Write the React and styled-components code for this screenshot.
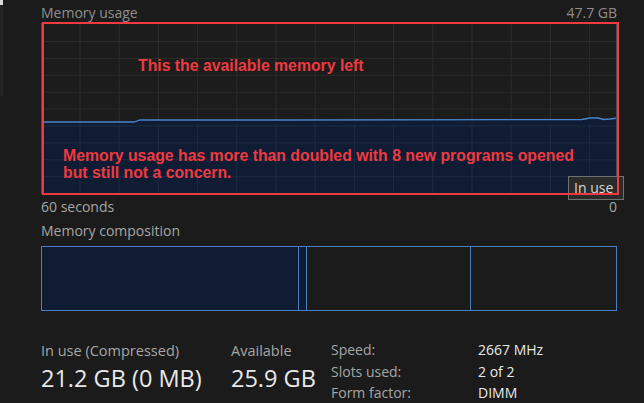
import React from "react";
import styled, { createGlobalStyle } from "styled-components";

const GlobalStyle = createGlobalStyle`
  html, body {
    margin: 0;
    padding: 0;
    background: #1b1b1b;
    overflow: hidden;
  }
  body {
    font-family: "Open Sans", "Noto Sans", sans-serif;
  }
`;

const CHART_W = 576;
const CHART_H = 171;

const usage = [
  [0, 98], [92, 98], [98, 96], [250, 96], [540, 95.5], [548, 94], [556, 94],
  [562, 95.5], [568, 95], [576, 94],
];

const Page = styled.div`
  display: flex;
  width: 644px;
  height: 403px;
`;

const SideEdge = styled.div`
  width: 3px;
  height: 96px;
  background: #242424;
  border-top: 5px solid #d8d8d8;
  box-sizing: border-box;
`;

const Content = styled.div`
  margin-left: 38px;
  width: 576px;
  padding-top: 4px;
`;

const Row = styled.div`
  display: flex;
  justify-content: space-between;
  align-items: flex-end;
  height: ${(p) => p.$h || 18}px;
  font-size: 14px;
  color: ${(p) => p.$color || "#9a9a9a"};
  line-height: 18px;
`;

const Chart = styled.div`
  position: relative;
  margin-top: 1px;
  width: ${CHART_W}px;
  height: ${CHART_H}px;
  box-sizing: border-box;
  border: 1px solid #4d4d4d;
  background: #1c1c1c;
  svg {
    display: block;
  }
`;

const RedFrame = styled.div`
  position: absolute;
  left: 0;
  top: -2px;
  right: -3px;
  bottom: -2px;
  border: 2px solid #ee3a40;
  pointer-events: none;
`;

const Note = styled.div`
  position: absolute;
  left: ${(p) => p.$x}px;
  top: ${(p) => p.$y}px;
  font-family: "Liberation Sans", Arial, sans-serif;
  font-weight: 700;
  font-size: 15.8px;
  line-height: 17px;
  color: #ee3a40;
  white-space: nowrap;
`;

const Tooltip = styled.div`
  position: absolute;
  left: 526px;
  top: 152px;
  width: 56px;
  height: 24px;
  box-sizing: border-box;
  background: #2b2b2b;
  border: 1px solid #707070;
  color: #d6d6d6;
  font-size: 14px;
  line-height: 22px;
  padding-left: 5px;
`;

const Composition = styled.div`
  display: flex;
  margin-top: 6px;
  height: 65px;
  border: 1px solid #4a7fc1;
  box-sizing: border-box;
`;

const Segment = styled.div`
  box-sizing: border-box;
  width: ${(p) => p.$w}px;
  flex: ${(p) => (p.$grow ? 1 : "none")};
  background: ${(p) => (p.$filled ? "#0f1c33" : "transparent")};
  border-right: ${(p) => (p.$last ? "none" : "1px solid #4a7fc1")};
`;

const Stats = styled.div`
  display: flex;
  margin-top: 31px;
`;

const Stat = styled.div`
  width: ${(p) => p.$w}px;
`;

const StatLabel = styled.div`
  font-size: 14.5px;
  line-height: 18px;
  color: #a6a6a6;
`;

const StatValue = styled.div`
  margin-top: 5px;
  font-size: 23.5px;
  line-height: 26px;
  color: #e8e8e8;
`;

const Specs = styled.div`
  display: grid;
  grid-template-columns: 147px auto;
  font-size: 14px;
  line-height: 21.5px;
  margin-top: -3px;
`;

const SpecKey = styled.div`
  color: #a6a6a6;
`;

const SpecVal = styled.div`
  color: #e8e8e8;
`;

function UsageChart() {
  const w = CHART_W - 2;
  const h = CHART_H - 2;
  const vLines = Array.from({ length: 14 }, (_, i) => 38 + i * 39.2);
  const hLines = Array.from({ length: 9 }, (_, i) => 17.5 + i * 16.9);
  const line = usage.map(([x, y]) => `${x},${y}`).join(" ");
  const area = `0,${h} ${line} ${w},${h}`;
  return (
    <svg width={w} height={h} viewBox={`0 0 ${w} ${h}`}>
      {vLines.map((x) => (
        <line key={x} x1={x} y1={0} x2={x} y2={h} stroke="#2c2c2c" strokeWidth="1" />
      ))}
      {hLines.map((y) => (
        <line key={y} x1={0} y1={y} x2={w} y2={y} stroke="#2c2c2c" strokeWidth="1" />
      ))}
      <polygon points={area} fill="#0f1c33" />
      {vLines.map((x) => (
        <line key={"b" + x} x1={x} y1={100} x2={x} y2={h} stroke="#1d2b44" strokeWidth="1" />
      ))}
      {hLines.filter((y) => y > 99).map((y) => (
        <line key={"b" + y} x1={0} y1={y} x2={w} y2={y} stroke="#1d2b44" strokeWidth="1" />
      ))}
      <polyline points={line} fill="none" stroke="#4a84cc" strokeWidth="1.3" />
    </svg>
  );
}

export default function App() {
  return (
    <Page>
      <GlobalStyle />
      <SideEdge />
      <Content>
        <Row $h={18} $color="#8f8f8f">
          <span>Memory usage</span>
          <span>47.7 GB</span>
        </Row>
        <Chart>
          <UsageChart />
          <Tooltip>In use</Tooltip>
          <Note $x={96} $y={33}>This the available memory left</Note>
          <Note $x={21} $y={123}>
            Memory usage has more than doubled with 8 new programs opened
            <br />
            but still not a concern.
          </Note>
          <RedFrame />
        </Chart>
        <Row $h={22} $color="#a6a6a6">
          <span>60 seconds</span>
          <span>0</span>
        </Row>
        <Row $h={24} $color="#a6a6a6">
          <span>Memory composition</span>
        </Row>
        <Composition>
          <Segment $w={257} $filled />
          <Segment $w={8} $filled />
          <Segment $w={164} />
          <Segment $grow $last />
        </Composition>
        <Stats>
          <Stat $w={190}>
            <StatLabel>In use (Compressed)</StatLabel>
            <StatValue>21.2 GB (0 MB)</StatValue>
          </Stat>
          <Stat $w={100}>
            <StatLabel>Available</StatLabel>
            <StatValue>25.9 GB</StatValue>
          </Stat>
          <Specs>
            <SpecKey>Speed:</SpecKey>
            <SpecVal>2667 MHz</SpecVal>
            <SpecKey>Slots used:</SpecKey>
            <SpecVal>2 of 2</SpecVal>
            <SpecKey>Form factor:</SpecKey>
            <SpecVal>DIMM</SpecVal>
          </Specs>
        </Stats>
      </Content>
    </Page>
  );
}
